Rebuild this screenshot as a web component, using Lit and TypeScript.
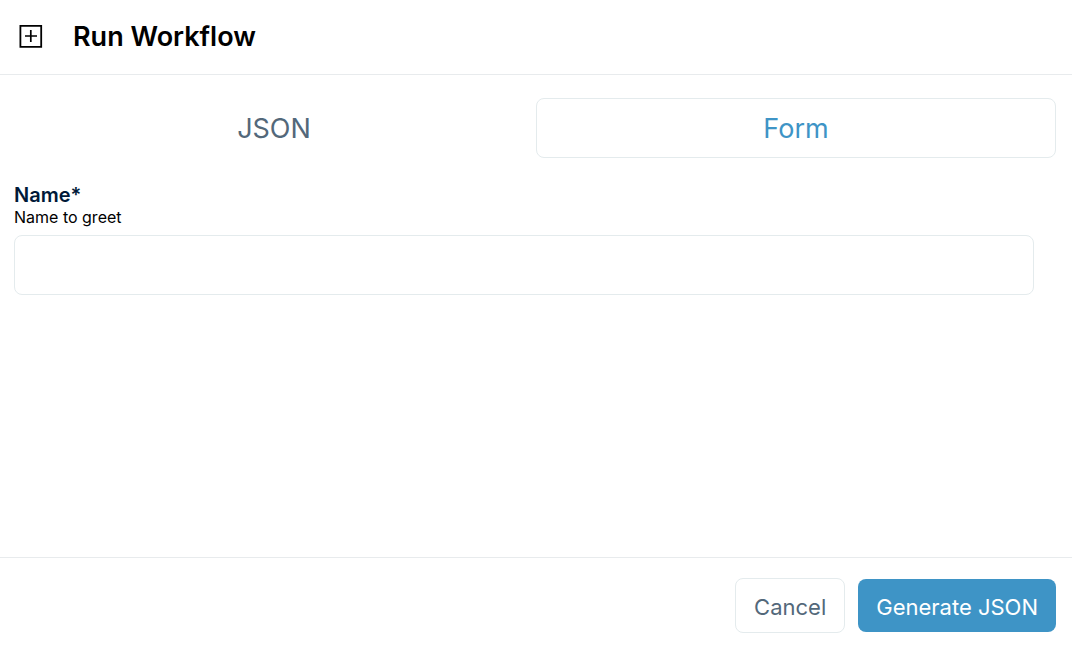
import { LitElement, html, css } from "lit";
import { customElement, state } from "lit/decorators.js";

@customElement("app-root")
export class AppRoot extends LitElement {
  static styles = css`
    :host {
      display: flex;
      flex-direction: column;
      min-height: 100vh;
      background: #fff;
      color: #000;
      font-family: Inter, sans-serif;
    }
    *, *::before, *::after { box-sizing: border-box; }
    button, input { font: inherit; }
    button { cursor: pointer; }
    .header {
      display: flex;
      align-items: center;
      gap: 30px;
      padding: 18px 19px;
      border-bottom: 1px solid #e8ebed;
    }
    .icon { display: block; width: 24px; height: 24px; }
    .title { margin: 0; font-size: 27px; line-height: 38px; font-weight: 600; }
    .body { flex: 1; padding: 23px 16px 24px 14px; }
    .tabs { display: grid; grid-template-columns: 1fr 1fr; gap: 2px; }
    .tab {
      height: 60px;
      padding: 0;
      border: 1px solid transparent;
      border-radius: 8px;
      background: none;
      color: #53687a;
      font-size: 27px;
    }
    .tab.active { border-color: #e4ebed; color: #3e94c6; }
    .field { display: flex; flex-direction: column; margin: 25px 22px 0 0; }
    .label { color: #001938; font-size: 20px; line-height: 24px; font-weight: 600; }
    .hint { margin: 0; font-size: 16px; line-height: 20px; }
    .input {
      height: 60px;
      margin-top: 8px;
      padding: 0 16px;
      border: 1px solid #e4ebed;
      border-radius: 8px;
      background: #fff;
      font-size: 22px;
    }
    .footer {
      display: flex;
      justify-content: flex-end;
      align-items: center;
      gap: 13px;
      padding: 20px 16px 12px;
      border-top: 1px solid #e8ebed;
    }
    .btn {
      height: 55px;
      padding: 2px 18px 0;
      border: 1px solid #e4ebed;
      border-radius: 8px;
      background: #fff;
      color: #53687a;
      font-size: 22px;
    }
    .btn.primary { height: 53px; border: 0; background: #3e94c6; color: #fff; }
  `;

  @state() private tab = "Form";

  render() {
    return html`
      <header class="header">
        <svg class="icon" viewBox="0 0 24 24" fill="none" stroke="#000" aria-hidden="true">
          <path d="M1.4 7.5V0.9H22.2V21.9H1.4Z" stroke-width="1.8" />
          <path d="M11.8 5V17M6 11H18" stroke-width="1.7" />
        </svg>
        <h1 class="title">Run Workflow</h1>
      </header>
      <main class="body">
        <div class="tabs" role="tablist">
          ${["JSON", "Form"].map((name) => html`
            <button
              class="tab ${this.tab === name ? "active" : ""}"
              role="tab"
              aria-selected=${this.tab === name}
              @click=${() => (this.tab = name)}
            >${name}</button>`)}
        </div>
        <div class="field">
          <label class="label" for="name">Name*</label>
          <p class="hint" id="name-hint">Name to greet</p>
          <input class="input" id="name" type="text" required aria-describedby="name-hint" />
        </div>
      </main>
      <footer class="footer">
        <button class="btn">Cancel</button>
        <button class="btn primary">Generate JSON</button>
      </footer>
    `;
  }
}
